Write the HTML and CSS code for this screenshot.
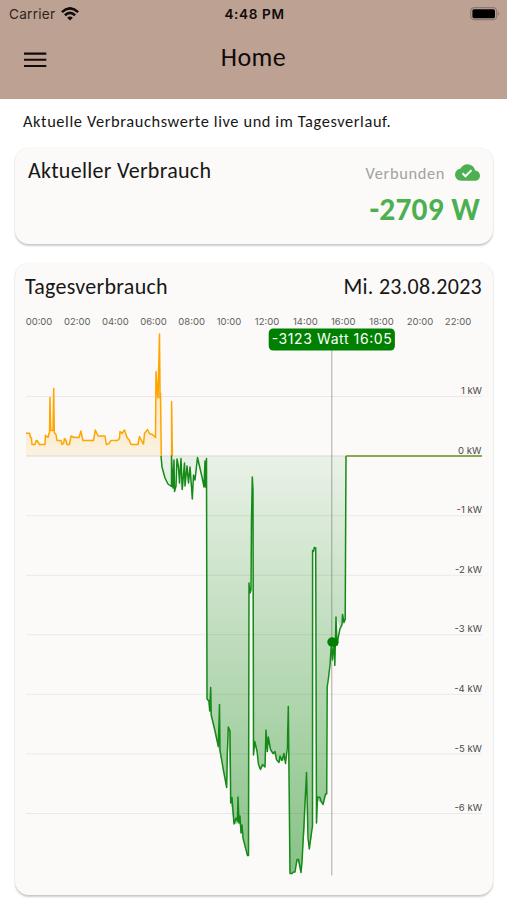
FILE: index.html
```
<!DOCTYPE html>
<html lang="de">
<head>
<meta charset="utf-8">
<title>Home</title>
<link rel="stylesheet" href="styles.css">
</head>
<body>
<header class="top">
  <div class="status">
    <div class="carrier"><span>Carrier</span>
      <svg width="18" height="14" viewBox="0 0 18 14" fill="none" stroke="#100b09" stroke-width="2.6"><path d="M.9 5.1Q9-2.4 17.1 5.1M3.9 8.2Q9 3.6 14.1 8.2"/><path d="M9 13.5 6.2 10.7Q9 8.4 11.8 10.7Z" fill="#100b09" stroke="none"/></svg>
    </div>
    <div class="clock">4:48 PM</div>
    <svg class="battery" width="30" height="14" viewBox="0 0 30 14"><rect x=".7" y=".7" width="26" height="12" rx="3.6" fill="none" stroke="#8d7970" stroke-width="1.2"/><rect x="2.4" y="2.2" width="22.6" height="9" rx="1.6" fill="#000"/><path d="M28 4.8Q30.8 6.7 28 8.6Z" fill="#8d7970"/></svg>
  </div>
  <div class="bar">
    <svg class="menu" width="24" height="18" viewBox="0 0 24 18" stroke="#100b09" stroke-width="2.1"><path d="M1 2.6H23.3M1 8.8H23.3M1 15H23.3"/></svg>
    <h1>Home</h1>
  </div>
</header>
<main>
  <p class="intro">Aktuelle Verbrauchswerte live und im Tagesverlauf.</p>
  <section class="card current">
    <h2>Aktueller Verbrauch</h2>
    <div class="reading">
      <div class="link"><span>Verbunden</span>
        <svg width="25" height="17" viewBox="0 4 24 16"><path fill="#4caf50" d="M19.35 10.04A7.49 7.49 0 0 0 12 4C9.11 4 6.6 5.64 5.35 8.04A5.994 5.994 0 0 0 0 14c0 3.31 2.69 6 6 6h13c2.76 0 5-2.24 5-5 0-2.64-2.05-4.78-4.65-4.96zM10 17l-3.5-3.5 1.41-1.41L10 14.17 15.18 9l1.41 1.41L10 17z"/></svg>
      </div>
      <div class="value">-2709 W</div>
    </div>
  </section>
  <section class="card daily">
    <div class="head"><h2>Tagesverbrauch</h2><span class="date">Mi. 23.08.2023</span></div>
    <svg class="chart" width="478" height="580" viewBox="15 305 478 580">
      <defs>
        <linearGradient id="load" gradientUnits="userSpaceOnUse" x1="0" y1="456" x2="0" y2="875"><stop stop-color="#008000" stop-opacity=".07"/><stop offset="1" stop-color="#008000" stop-opacity=".46"/></linearGradient>
        <linearGradient id="use" gradientUnits="userSpaceOnUse" x1="0" y1="335" x2="0" y2="456"><stop stop-color="#ffa500" stop-opacity=".35"/><stop offset="1" stop-color="#ffa500" stop-opacity=".1"/></linearGradient>
      </defs>
      <path class="fill-use" d="M26 456V433.5H29.5L31 438 32 444.5H35L37 440.5 39.5 444.5H45L45.5 435 48 437 49.5 432H53L56 434 57 440H61L63 444.5 65 438 69 444.5 71 436H79L81 431 83 440H94L95.5 430 97 436H105L106 444.5H110L118 439.5 120 431H125L131 444.5H138L140 436 143 444 145 432H149L155.5 437 156 371 158 395 159.5 334 161 393 161.5 456Z"/>
      <path class="fill-load" d="M160.8 456 162 467 165 478 171 487 173 456 174 491 177 459 180 486 184 488 188 466 190 487 193 465 195 480 198 457 204 486 206 458 207 699 211 715 218 746 223 768 227 787 228 726 231 804 234 824 239 823 248.5 856 249 583 250.5 594 252 477 253.5 755 255 741 260 769 265 765 266 730 268 744 273 753 279 761 286 760 288 708 290 873 294 873 298 860 301 872 305 825 306 772 309 849 312 835 312.5 550 315.5 548 316 823 317 800 323 804 326.5 793 327 686 330 665 332 642 335 652 336 617 341 630 344 622 346 620V456Z"/>
      <path class="grid" d="M26 396.5H482M26 515.7H482M26 575.3H482M26 634.7H482M26 694.3H482M26 754H482M26 813.5H482"/>
      <path class="zero" d="M26 456H482"/>
      <path class="cursor" d="M331.7 350V875.5"/>
      <path class="line use" d="M26 433.3H29.5L30.5 437 31.5 438.5 32 444.5H35L36 441 37 440.5 39.5 444.5H45L45.5 435.3 48 437.5 49.5 432 50 397.5 50.8 430.5H53L53.7 388.5 54.3 432.5 56 434.5 57 440.5H61L62 444.5 63.5 443.5 64.5 438.5 66 440.5 67 444.5H69.5L71 436 74 437.5H79L81 431 81.5 434 83 440.5H93.5L95.3 430 98 436H105L106.3 444.5 109 443.5 111 440.5H117.5L119.5 438.5 120 431.5 122 433.5 124.5 430 127 437.5 129.5 440.5 131 444.5H138L139.5 436.5 142 441.5 143.5 444 144.5 433.5 147.5 429.5 149.5 433.5 153 435 155.5 437.5 156 371.5 157.5 395 158 398 159.5 334 160 398 160.5 393 161.3 456M171.6 456V401.5L172.4 456"/>
      <path class="line load" d="M161 456 162 467 165 478 168 484 171.5 486.5V456L173 488 174 460 174.5 491.5 176 486 177 459 178.5 467 179.5 483 181 458.5 182.2 489.5 184.5 463 185 486 187 466 188.5 483 190 467 191.5 487 192.3 499 193.5 475 195 480 197.5 457.5 199 464 202 477 204 487 205 461 205.5 487 206.5 458.5 207 699 209 701 209.7 711 210.7 687.5 211.2 715 215 731 218.3 746.5 219.5 704.5 220 750 223 768 226.7 787.5 227.3 754 228.3 727 230 731 230.7 803 232 797.5 234 824 236 818 237.5 821 238 797 239 823 240 816 241 833 242 825 243 838 247.5 855.5H248.5L249 583 250 593 251 590 251.5 520 252.3 477 253 490 253.5 755 254.8 741.5 257 751 258.5 764.5 260.5 769.5 262.5 764.5 265 767 266 730 267.3 751.5 268.3 737 270.5 749.5 273 753.5 275 751.5 276.5 759.5 279 762.5 280 756 282 760.5 284 753.5 285.5 763.5 287.3 748 288.3 706.5 288.8 754 290 873.5H292L293.5 872 295 872 297 859.5H298.5L301 872.5 302 862 304 824 306.5 772.5 308 838 309.3 849 311.2 835 312.5 826 312.6 550.5 313.5 551.5 314.3 547.5 315.7 548 316.5 823 317.5 797 320 797.5 321 801 323 804.5 325.5 794 326.7 794 327.2 687 328.5 678 330 665 331.5 642 332.5 660 334.3 640.5 334.8 665.5 336 617 337 645 338.5 636 340 628.5 342 624.5 342.5 614.5 344 622.5 345.2 619 346 456"/>
      <path class="after" d="M346 456H482"/>
      <g class="marker"><circle cx="332" cy="642" r="4.7"/><circle cx="334.3" cy="642.3" r="4.3"/></g>
      <g class="axis hours"><text x="39" y="325.2">00:00</text><text x="77.3" y="325.2">02:00</text><text x="115.4" y="325.2">04:00</text><text x="153.5" y="325.2">06:00</text><text x="191.6" y="325.2">08:00</text><text x="229" y="325.2">10:00</text><text x="267" y="325.2">12:00</text><text x="305.3" y="325.2">14:00</text><text x="343.2" y="325.2">16:00</text><text x="381.5" y="325.2">18:00</text><text x="420" y="325.2">20:00</text><text x="458" y="325.2">22:00</text></g>
      <g class="axis power"><text x="482" y="394">1 kW</text><text x="481.3" y="453.5">0 kW</text><text x="482" y="513.2">-1 kW</text><text x="482" y="572.8">-2 kW</text><text x="482" y="632.3">-3 kW</text><text x="482" y="691.8">-4 kW</text><text x="482" y="751.5">-5 kW</text><text x="482" y="811">-6 kW</text></g>
      <rect x="268.7" y="328.5" width="126.2" height="22" rx="4.5" fill="#008000"/>
      <text class="tip" x="331.7" y="344.2" textLength="120">-3123 Watt 16:05</text>
    </svg>
  </section>
</main>
</body>
</html>
```

FILE: styles.css
```
* { box-sizing: border-box; }
body { margin: 0; height: 900px; overflow: hidden; background: #fff; color: #171717; font-family: Carlito, Calibri, Lato, sans-serif; }
h1, h2, p { margin: 0; font-weight: 400; }
svg { display: block; flex: none; }
.top { height: 98.5px; background: #bda294; color: #100b09; }
.status { height: 28px; display: grid; grid-template-columns: 1fr auto 1fr; align-items: center; padding: 0 7px 0 9px; font-family: Inter, sans-serif; }
.carrier { display: flex; align-items: center; gap: 6px; font-size: 13.6px; letter-spacing: .25px; color: #2d2420; }
.clock { font-size: 13.6px; font-weight: 600; letter-spacing: .6px; }
.battery { justify-self: end; margin-top: -1px; }
.bar { height: 62px; display: grid; grid-template-columns: 60px 1fr 60px; align-items: center; }
.menu { margin-left: 23px; margin-top: 1px; }
.bar h1 { text-align: center; font-size: 26px; line-height: 30px; letter-spacing: .5px; margin-top: -4px; }
main { padding: 0 14px 0 15px; }
.intro { padding: 12px 0 0 8px; height: 49px; font-size: 16.4px; line-height: 20px; letter-spacing: .6px; white-space: nowrap; }
.card { background: #fbfaf8; border-radius: 14px; box-shadow: 0 1.5px 2px rgba(0,0,0,.2), 0 0 2px rgba(0,0,0,.06); }
.card h2 { font-size: 22px; line-height: 26px; letter-spacing: .28px; white-space: nowrap; }
.current { height: 96.5px; display: flex; justify-content: space-between; padding: 10px 13px 0; }
.reading { display: flex; flex-direction: column; align-items: flex-end; padding-top: 4px; }
.link { display: flex; align-items: center; gap: 10px; height: 22px; color: #a2a2a2; font-size: 16.4px; letter-spacing: .65px; }
.value { font-size: 31.5px; line-height: 36px; font-weight: 700; color: #4caf50; margin-top: 7px; letter-spacing: .2px; white-space: nowrap; }
.daily { height: 632px; margin-top: 19px; }
.head { display: flex; justify-content: space-between; height: 42px; padding: 11px 11px 0 10px; }
.date { font-size: 22px; line-height: 26px; letter-spacing: .28px; }
.fill-use { fill: url(#use); }
.fill-load { fill: url(#load); }
.grid { stroke: rgba(0,0,0,.065); }
.zero { stroke: #d9d8d6; stroke-width: 1.2; }
.cursor { stroke: rgba(100,100,100,.38); stroke-width: 1.4; }
.line { fill: none; stroke-width: 1.5; stroke-linejoin: round; }
.line.use { stroke: #ffa500; }
.line.load { stroke: #158a18; }
.after { stroke: #6f8f20; stroke-width: 1.3; }
.marker { fill: #008000; }
.axis { font-family: Inter, sans-serif; font-size: 9.5px; fill: #606060; }
.hours { text-anchor: middle; }
.power { text-anchor: end; fill: #484848; }
.tip { font-family: Inter, sans-serif; font-size: 14px; fill: #fff; text-anchor: middle; }
```
